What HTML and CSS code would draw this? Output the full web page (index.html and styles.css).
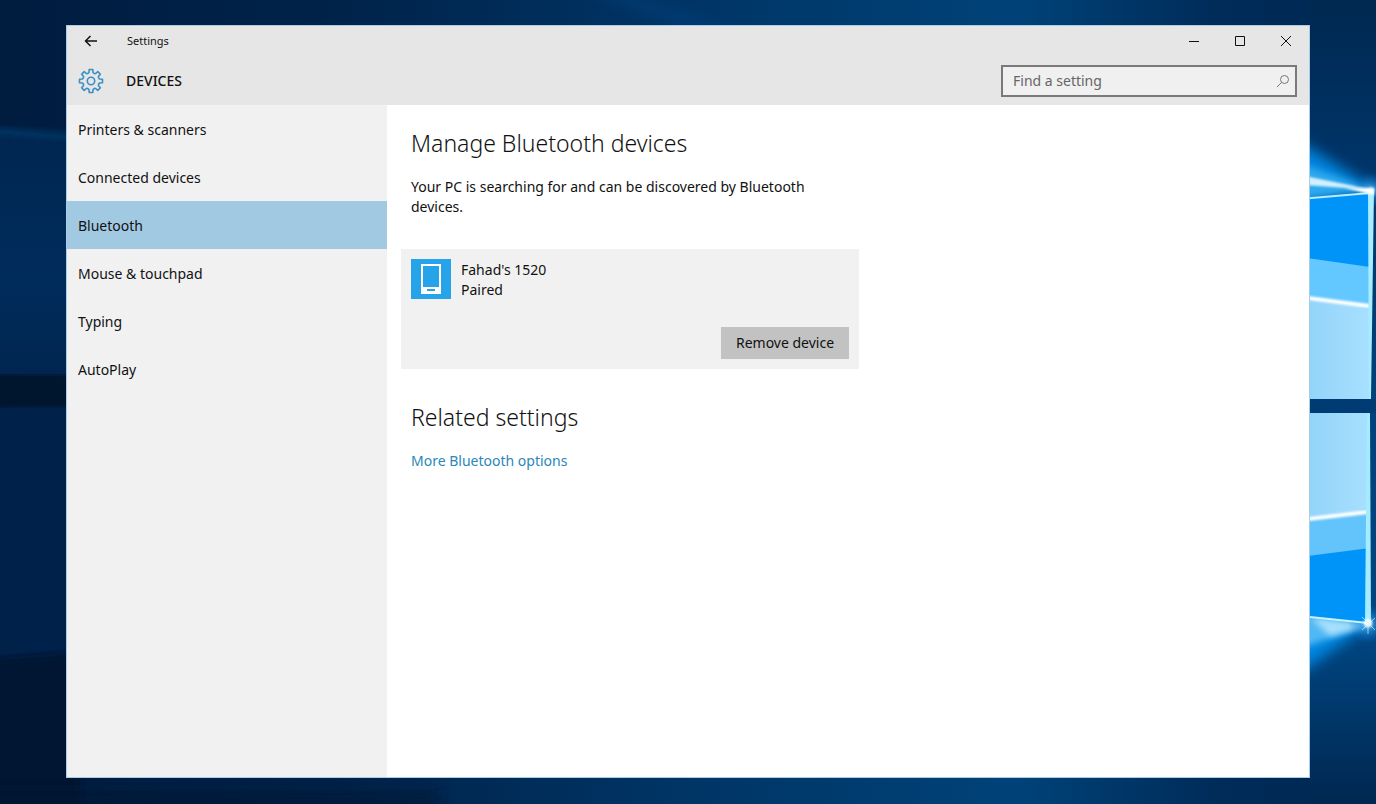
FILE: index.html
```
<!DOCTYPE html>
<html lang="en">
<head>
    <meta charset="UTF-8">
    <meta name="viewport" content="width=device-width, initial-scale=1.0">
    <title>Settings</title>
    <link rel="stylesheet" href="styles.css">
</head>
<body>

<svg class="wallpaper" viewBox="0 0 1376 804" preserveAspectRatio="xMaxYMid slice" aria-hidden="true">
    <defs>
        <linearGradient id="sky" x1="0" x2="1" y1="0" y2="0">
            <stop offset="0" stop-color="#001c3f"/>
            <stop offset="0.25" stop-color="#00234a"/>
            <stop offset="0.5" stop-color="#003566"/>
            <stop offset="0.74" stop-color="#004278"/>
            <stop offset="0.88" stop-color="#002c5a"/>
            <stop offset="1" stop-color="#002650"/>
        </linearGradient>
        <linearGradient id="beam" x1="0" x2="0" y1="0" y2="1">
            <stop offset="0" stop-color="#002650"/>
            <stop offset="0.6" stop-color="#002c5c"/>
            <stop offset="1" stop-color="#002650"/>
        </linearGradient>
        <linearGradient id="side" x1="0" x2="0" y1="0" y2="1">
            <stop offset="0" stop-color="#002850"/>
            <stop offset="0.2" stop-color="#003468"/>
            <stop offset="0.5" stop-color="#00427d"/>
            <stop offset="0.8" stop-color="#00447f"/>
            <stop offset="1" stop-color="#002750"/>
        </linearGradient>
        <linearGradient id="pane" x1="0" x2="1" y1="0" y2="0">
            <stop offset="0" stop-color="#8fd2f8"/>
            <stop offset="1" stop-color="#a8e0ff"/>
        </linearGradient>
        <radialGradient id="glow">
            <stop offset="0" stop-color="#8fdcff"/>
            <stop offset="0.3" stop-color="#38a4f0" stop-opacity="0.6"/>
            <stop offset="1" stop-color="#0070d0" stop-opacity="0"/>
        </radialGradient>
        <filter id="soft" x="-50%" y="-50%" width="200%" height="200%"><feGaussianBlur stdDeviation="7"/></filter>
        <filter id="mid" x="-50%" y="-50%" width="200%" height="200%"><feGaussianBlur stdDeviation="3"/></filter>
        <filter id="fine" x="-20%" y="-20%" width="140%" height="140%"><feGaussianBlur stdDeviation="1"/></filter>
    </defs>
    <rect width="1376" height="804" fill="url(#sky)"/>
    <!-- light beams on the left -->
    <path d="M0 130L80 137V374H0z" fill="url(#beam)"/>
    <path d="M-10 130L80 137" stroke="#003a6c" stroke-width="5" filter="url(#mid)"/>
    <path d="M-10 376H80V406H-10z" fill="#00142f" filter="url(#fine)"/>
    <path d="M0 408H80V648L0 656z" fill="#00214a"/>
    <path d="M-20 662L80 654V830H-20z" fill="#001533" filter="url(#mid)"/>
    <path d="M-40 790H440V830H-40z" fill="#001533" opacity="0.6" filter="url(#soft)"/>
    <path d="M600 -10L740 40" stroke="#00478a" stroke-width="12" opacity="0.4" filter="url(#soft)"/>
    <!-- logo panes on the right -->
    <path d="M1310 0H1376V804H1310z" fill="url(#side)"/>
    <path d="M1374 188L1290 136V205z" fill="#0086e0" filter="url(#soft)"/>
    <path d="M1374 190L1290 160V200z" fill="#2fa8ee" filter="url(#mid)"/>
    <path d="M1374 190L1290 173V184z" fill="#d2f0ff" filter="url(#fine)"/>
    <circle cx="1371" cy="190" r="18" fill="url(#glow)"/>
    <path d="M1370 624L1290 680V610z" fill="#0086e0" filter="url(#soft)"/>
    <path d="M1370 624L1290 652V612z" fill="#4fb8f4" filter="url(#mid)"/>
    <path d="M1370 625L1330 636L1310 617z" fill="#a8e0fc" filter="url(#mid)"/>
    <circle cx="1368" cy="624" r="20" fill="url(#glow)"/>
    <path d="M1300 198L1370 193V399H1300z" fill="#0094f8"/>
    <path d="M1300 257L1370 267V399H1300z" fill="#62c8ff"/>
    <path d="M1300 296L1370 306V399H1300z" fill="url(#pane)"/>
    <path d="M1300 297L1370 306" stroke="#fff" stroke-width="4" filter="url(#fine)"/>
    <path d="M1300 199L1370 193" stroke="#b8ecff" stroke-width="2"/>
    <path d="M1368 191L1374 189L1371 399H1369z" fill="#a8ecff"/>
    <path d="M1345 188L1374 188V195z" fill="#fff" filter="url(#fine)"/>
    <path d="M1300 399H1376V413H1300z" fill="#003c73"/>
    <path d="M1300 413H1370V623L1300 615z" fill="#0094f8"/>
    <path d="M1300 413H1370V548L1300 557z" fill="#62c4fa"/>
    <path d="M1300 413H1370V512L1300 520z" fill="url(#pane)"/>
    <path d="M1300 520L1368 512" stroke="#fff" stroke-width="4" filter="url(#fine)"/>
    <path d="M1367 414H1370L1371 624L1365 623z" fill="#a4ecff"/>
    <path d="M1300 616L1368 623" stroke="#c8f2ff" stroke-width="2"/>
    <circle cx="1368" cy="623" r="4" fill="#fff" filter="url(#fine)"/>
    <path d="M1362 617L1375 630M1375 618L1362 630M1368 614V634" stroke="#c8f2ff" opacity="0.7"/>
</svg>

<div class="window">
    <header class="top">
        <div class="titlebar">
            <button class="back" aria-label="Back">
                <svg width="14" height="12" viewBox="0 0 14 12"><path d="M13 6H1.500M6.500 1L1.500 6L6.500 11"/></svg>
            </button>
            <span class="app-name">Settings</span>
            <button class="control" aria-label="Minimize">
                <svg width="12" height="12" viewBox="0 0 12 12"><path d="M1 6.500H11"/></svg>
            </button>
            <button class="control" aria-label="Maximize">
                <svg width="12" height="12" viewBox="0 0 12 12"><path d="M1.500 1.500H10.500V10.500H1.500z"/></svg>
            </button>
            <button class="control" aria-label="Close">
                <svg width="12" height="12" viewBox="0 0 12 12"><path d="M1 1L11 11M11 1L1 11"/></svg>
            </button>
        </div>
        <div class="heading">
            <svg class="gear" width="26" height="26" viewBox="0 0 26 26" aria-hidden="true">
                <path d="M11.200 1.500H14.800L15 4.400Q16 6 17.700 5.500L19.800 3.600L22.400 6.200L20.500 8.300Q20 10 21.600 11L24.500 11.200V14.800L21.600 15Q20 16 20.500 17.700L22.400 19.800L19.800 22.400L17.700 20.500Q16 20 15 21.600L14.800 24.500H11.200L11 21.600Q10 20 8.300 20.500L6.200 22.400L3.600 19.800L5.500 17.700Q6 16 4.400 15L1.500 14.800V11.200L4.400 11Q6 10 5.500 8.300L3.600 6.200L6.200 3.600L8.300 5.500Q10 6 11 4.400z"/>
                <circle cx="13" cy="13" r="3.700"/>
            </svg>
            <h1>Devices</h1>
            <form class="search">
                <input type="search" placeholder="Find a setting" aria-label="Find a setting">
                <button type="button" aria-label="Search">
                    <svg width="14" height="14" viewBox="0 0 14 14"><circle cx="8.500" cy="5.500" r="4"/><path d="M5.600 8.400L1 13"/></svg>
                </button>
            </form>
        </div>
    </header>

    <div class="body">
        <nav class="sidebar">
            <a href="#">Printers &amp; scanners</a>
            <a href="#">Connected devices</a>
            <a href="#" class="active" aria-current="page">Bluetooth</a>
            <a href="#">Mouse &amp; touchpad</a>
            <a href="#">Typing</a>
            <a href="#">AutoPlay</a>
        </nav>

        <main class="content">
            <h2>Manage Bluetooth devices</h2>
            <p class="status">Your PC is searching for and can be discovered by Bluetooth devices.</p>

            <div class="device">
                <div class="device-info">
                    <svg class="device-icon" width="40" height="40" viewBox="0 0 40 40" aria-hidden="true">
                        <path d="M0 0H40V40H0z" fill="#27a3e9"/>
                        <path d="M10 5H30V35H10z" fill="#fff"/>
                        <path d="M12 7H28V28H12zM16 30H24V32H16z" fill="#27a3e9"/>
                    </svg>
                    <div class="device-text">
                        <div>Fahad's 1520</div>
                        <div>Paired</div>
                    </div>
                </div>
                <button class="remove">Remove device</button>
            </div>

            <h2>Related settings</h2>
            <a class="more" href="#">More Bluetooth options</a>
        </main>
    </div>
</div>

</body>
</html>
```
FILE: styles.css
```
* { box-sizing: border-box; }
body {
    margin: 0;
    min-height: 100vh;
    padding: 25px 66px 26px;
    display: flex;
    background: #00234a;
    color: #111;
    font-family: "Noto Sans", "Open Sans", sans-serif;
    font-size: 14px;
    line-height: 20px;
}
h1, h2, p { margin: 0; }
button { border: none; padding: 0; background: none; color: inherit; font: inherit; }
svg { display: block; fill: none; stroke-width: 1; }
button svg { stroke: #111; }

.wallpaper {
    position: absolute;
    top: 0;
    left: 0;
    width: 100%;
    height: 100%;
    z-index: -1;
}

.window {
    flex: 1;
    display: flex;
    flex-direction: column;
    border: 1px solid #a9cde6;
    background: #fff;
}

/* title bar and page heading */
.top { background: #e6e6e6; }
.titlebar { display: flex; height: 31px; padding-bottom: 2px; }
.back, .control {
    width: 46px;
    display: flex;
    align-items: center;
    justify-content: center;
}
.back { width: 48px; }
.back svg { stroke-width: 1.5; }
.app-name { flex: 1; padding-left: 12px; font-size: 11px; line-height: 29px; }
.heading { display: flex; align-items: center; height: 48px; padding: 0 12px 0 11px; }
.gear { stroke: #3b8fc4; stroke-width: 1.6; stroke-linejoin: round; }
h1 {
    flex: 1;
    padding-left: 22px;
    font-size: 14px;
    font-weight: 500;
    text-transform: uppercase;
}
.search {
    width: 296px;
    height: 32px;
    display: flex;
    border: 2px solid #7a7a7a;
    background: #f0f0f0;
}
.search input {
    flex: 1;
    min-width: 0;
    padding: 0 10px;
    border: none;
    outline: none;
    background: none;
    font: inherit;
}
.search input::placeholder { color: #666; }
.search button { padding: 0 5px; }
.search svg { stroke: #777; }

.body { flex: 1; display: flex; }

.sidebar { width: 320px; background: #f1f1f1; }
.sidebar a {
    display: block;
    height: 48px;
    padding-left: 11px;
    line-height: 50px;
    color: inherit;
    text-decoration: none;
}
.sidebar .active { background: #a1c9e2; }

.content { flex: 1; padding: 22px 24px; }
h2 { font-size: 23px; font-weight: 300; line-height: 32px; }
.status { max-width: 430px; margin-top: 18px; }

.device {
    display: flex;
    flex-direction: column;
    max-width: 458px;
    height: 120px;
    margin: 32px 0 32px -10px;
    padding: 10px;
    background: #f1f1f1;
}
.device-info { display: flex; gap: 10px; }
.device-text { padding-top: 1px; }
.remove {
    align-self: flex-end;
    width: 128px;
    height: 32px;
    margin-top: auto;
    background: #c2c2c2;
}
.more { display: inline-block; margin-top: 18px; color: #2a87b8; text-decoration: none; }
```
